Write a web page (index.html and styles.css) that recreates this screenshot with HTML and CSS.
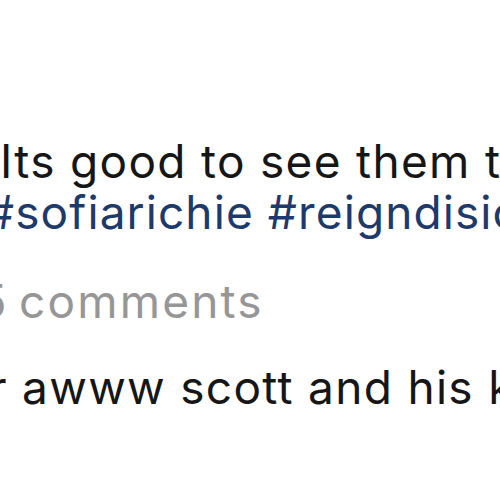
FILE: index.html
```html
<!DOCTYPE html>
<html>
<head>
  <title>Post comments</title>
  <link rel="stylesheet" href="styles.css">
</head>
<body>
  <div id="post">
    <div id="caption">
      <div class="caption-line first">Its good to see them together</div>
      <div class="caption-line tags">#sofiarichie #reigndisick</div>
    </div>
    <div id="view-all">35 comments</div>
    <div class="comment">user awww scott and his kids</div>
  </div>
</body>
</html>
```
FILE: styles.css
```css
body {
  margin: 0;
  padding: 0;
  background-color: #fff;
  font-family: "Inter", "Liberation Sans", sans-serif;
  font-size: 46px;
  color: #161616;
  overflow: hidden;
  width: 500px;
  height: 500px;
}

#post {
  padding-top: 136px;
  white-space: nowrap;
  letter-spacing: 1.3px;
}

.caption-line {
  line-height: 51px;
}

.caption-line.first {
  text-indent: 0;
}

.caption-line.tags {
  color: #1d3a6b; /* hashtag blue */
  text-indent: -15px;
  letter-spacing: 1.1px;
}

#view-all {
  color: #969696;
  line-height: 51px;
  margin-top: 38px;
  letter-spacing: 2.2px;
  word-spacing: -5px;
  text-indent: -52px;
}

.comment {
  line-height: 51px;
  margin-top: 35px;
  text-indent: -93px;
}
```
